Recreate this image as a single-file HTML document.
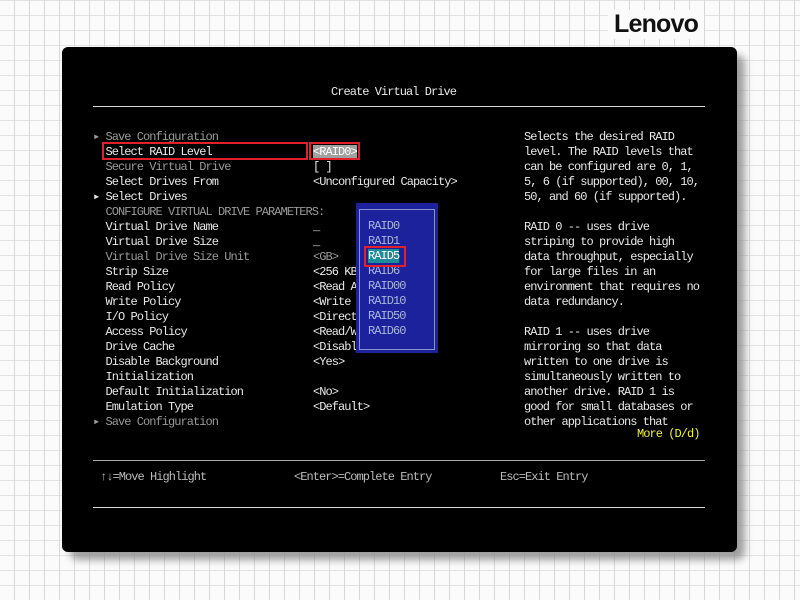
<!DOCTYPE html>
<html><head><style>
html,body{margin:0;padding:0;}
body{width:800px;height:600px;overflow:hidden;position:relative;background:#fbfbfb;
background-image:repeating-linear-gradient(90deg,transparent 0 14px,#d8d8d8 14px 15px),repeating-linear-gradient(0deg,transparent 0 14px,#e2e2e2 14px 15px);}
.logo{position:absolute;left:608px;top:10px;font:bold 25px "Liberation Sans",sans-serif;color:#111;letter-spacing:-0.8px;background:#fbfbfb;padding:0 6px;}
.shadow{position:absolute;left:70px;top:55px;width:675px;height:505px;background:#888;border-radius:8px;filter:blur(4px);opacity:.8}
.panel{position:absolute;left:62px;top:47px;width:675px;height:505px;background:#000;border-radius:6px;}
.t{position:absolute;font-family:"Liberation Mono",monospace;font-size:12px;letter-spacing:-0.95px;line-height:15px;white-space:pre;color:#e8e8e8;}
.g{color:#9a9a9a}
.line{position:absolute;height:1px;background:#ddd;left:93px;width:612px}
.pop{position:absolute;left:356px;top:203px;width:82px;height:150px;background:#1b229c;}
.pop .in{position:absolute;left:3px;top:6px;right:3px;bottom:3px;border:1px solid #8a94cc;}
.pt{color:#a9b5e0}
.box{position:absolute;border:2px solid #e0202a;}
</style></head><body>
<div class="logo">Lenovo</div>
<div class="shadow"></div>
<div class="panel"></div>
<div class="t" style="left:331px;top:85px">Create Virtual Drive</div>
<div class="line" style="top:106px"></div>
<div class="t" style="left:93px;top:130px"><span class="g">▸ Save Configuration</span>
  Select RAID Level
<span class="g">  Secure Virtual Drive</span>
  Select Drives From
▸ Select Drives
<span class="g">  CONFIGURE VIRTUAL DRIVE PARAMETERS:</span>
  Virtual Drive Name
  Virtual Drive Size
<span class="g">  Virtual Drive Size Unit</span>
  Strip Size
  Read Policy
  Write Policy
  I/O Policy
  Access Policy
  Drive Cache
  Disable Background
  Initialization
  Default Initialization
  Emulation Type
<span class="g">▸ Save Configuration</span></div>
<div class="t" style="left:313px;top:130px">
<span style="background:#a0a0a0;color:#fff">&lt;RAID0&gt;</span>
[ ]
&lt;Unconfigured Capacity&gt;


_
_
<span class="g">&lt;GB&gt;</span>
&lt;256 KB
&lt;Read A
&lt;Write
&lt;Direct
&lt;Read/W
&lt;Disabl
&lt;Yes&gt;

&lt;No&gt;
&lt;Default&gt;</div>
<div class="box" style="left:102px;top:142px;width:202px;height:14px"></div>
<div class="box" style="left:309px;top:142px;width:47px;height:14px"></div>
<div class="pop"><div class="in"></div></div>
<div class="t pt" style="left:368px;top:219px">RAID0
RAID1
<span style="background:#1f8a9a;color:#fff">RAID5</span>
RAID6
RAID00
RAID10
RAID50
RAID60</div>
<div class="box" style="left:364px;top:246px;width:38px;height:17px"></div>
<div class="t" style="left:524px;top:130px">Selects the desired RAID
level. The RAID levels that
can be configured are 0, 1,
5, 6 (if supported), 00, 10,
50, and 60 (if supported).

RAID 0 -- uses drive
striping to provide high
data throughput, especially
for large files in an
environment that requires no
data redundancy.

RAID 1 -- uses drive
mirroring so that data
written to one drive is
simultaneously written to
another drive. RAID 1 is
good for small databases or
other applications that</div>
<div class="t" style="left:637px;top:427px;color:#f0f040">More (D/d)</div>
<div class="line" style="top:460px;background:#aaa"></div>
<div class="t" style="left:100px;top:470px;color:#bbb">↑↓=Move Highlight</div>
<div class="t" style="left:294px;top:470px;color:#bbb">&lt;Enter&gt;=Complete Entry</div>
<div class="t" style="left:500px;top:470px;color:#bbb">Esc=Exit Entry</div>
<div class="line" style="top:507px"></div>
</body></html>
